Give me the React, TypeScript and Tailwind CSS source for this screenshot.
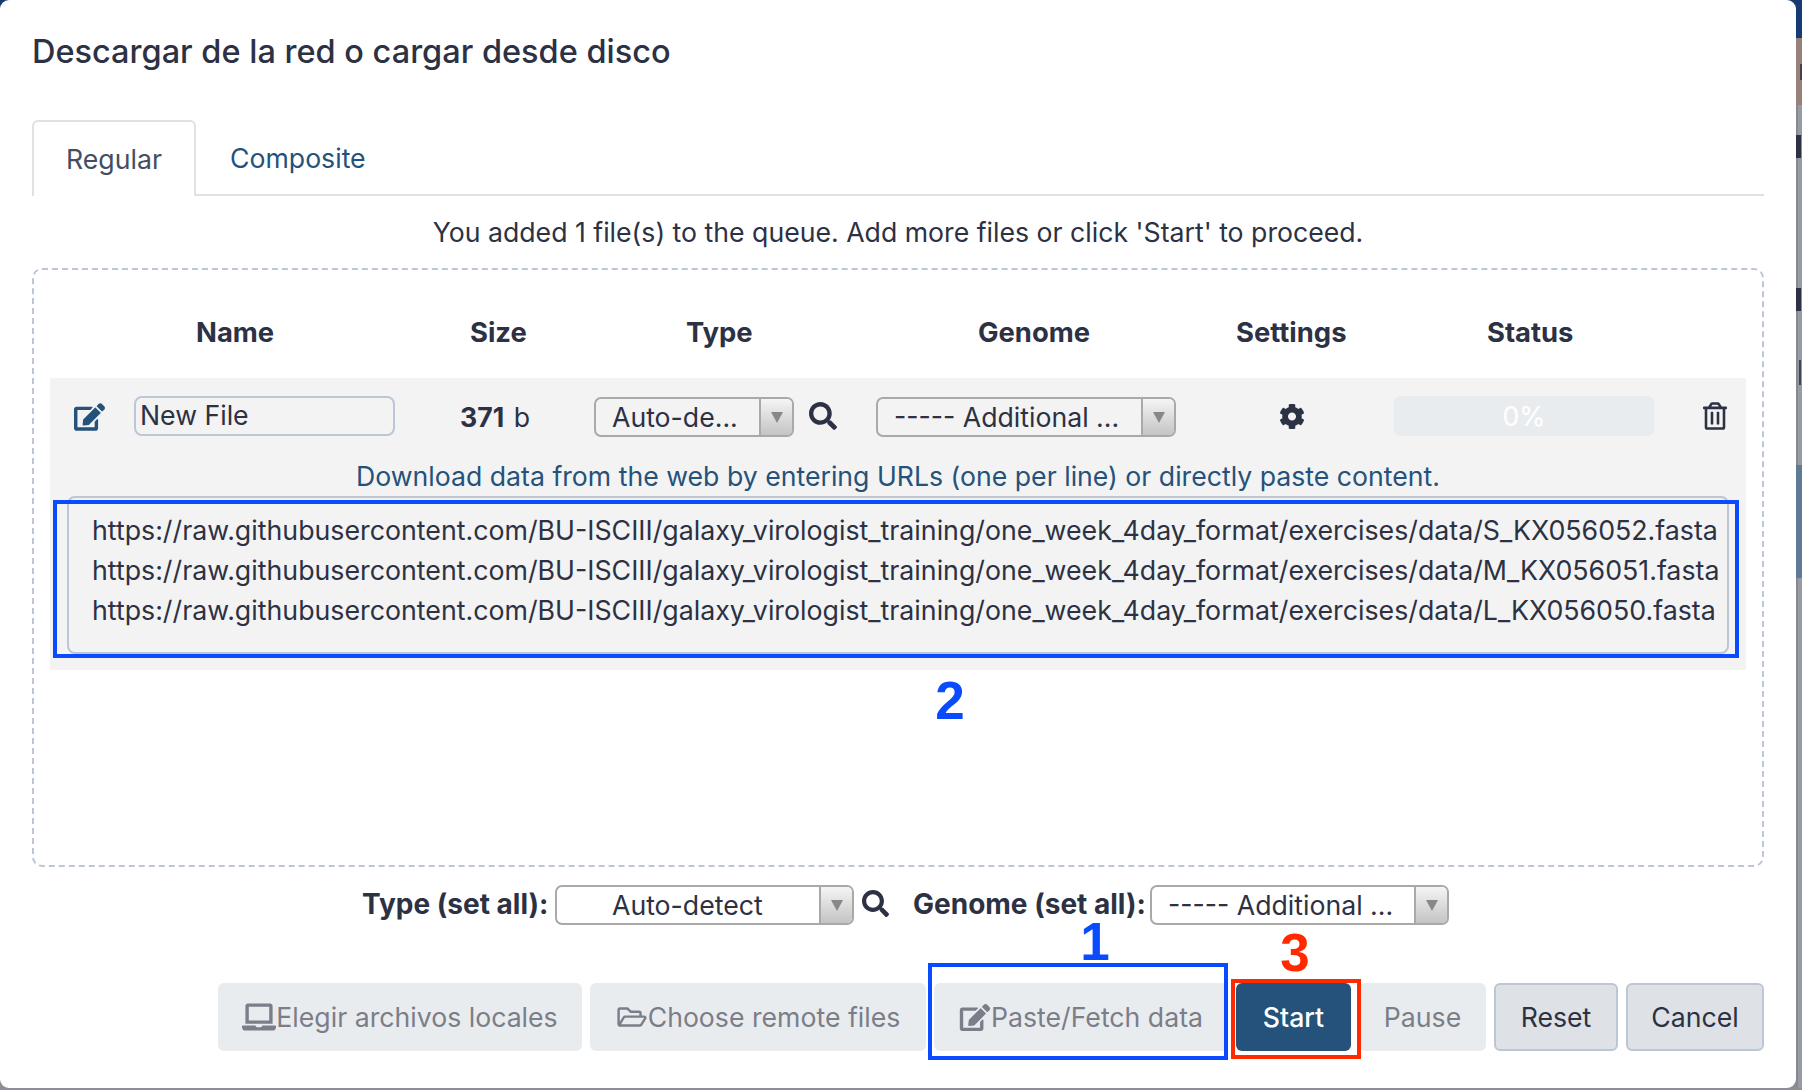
import { FaEdit, FaSearch, FaCog, FaRegTrashAlt, FaLaptop, FaRegFolderOpen } from 'react-icons/fa';

const URLS = [
  'https://raw.githubusercontent.com/BU-ISCIII/galaxy_virologist_training/one_week_4day_format/exercises/data/S_KX056052.fasta',
  'https://raw.githubusercontent.com/BU-ISCIII/galaxy_virologist_training/one_week_4day_format/exercises/data/M_KX056051.fasta',
  'https://raw.githubusercontent.com/BU-ISCIII/galaxy_virologist_training/one_week_4day_format/exercises/data/L_KX056050.fasta',
];

function Select({ label, className }: { label: string; className: string }) {
  return (
    <div className={`flex h-[40px] shrink-0 overflow-hidden rounded-[7px] border-2 border-[#a9a9a9] ${className}`}>
      <div className="min-w-0 flex-1 whitespace-nowrap text-[26.67px] leading-[37px]">{label}</div>
      <div className="flex w-[33px] shrink-0 items-center justify-center border-l-2 border-[#a9a9a9] bg-gradient-to-b from-[#f5f5f5] to-[#c4c4c4]">
        <span className="h-0 w-0 border-x-[6px] border-t-[11px] border-x-transparent border-t-[#888888]" />
      </div>
    </div>
  );
}

function DisabledButton({ children, width }: { children: React.ReactNode; width: string }) {
  return (
    <button className={`flex h-[68px] ${width} items-center justify-center rounded-[6px] bg-[#e9ecef] text-[26.67px] text-[#7b7e88]`}>
      {children}
    </button>
  );
}

// Slice of the page that shows behind the dialog on its right edge
function BackdropStrip() {
  return (
    <div className="flex flex-1 flex-col">
      <div className="h-[38px] bg-[#153a74]" />
      <div className="h-[26px] bg-[#96817a]" />
      <div className="h-[16px] bg-[#96817a] pl-[4px]">
        <div className="h-full bg-[#45404a]" />
      </div>
      <div className="h-[25px] bg-[#96817a]" />
      <div className="h-[30px] border-l-2 border-[#868892] bg-[#989aa4]" />
      <div className="h-[23px] w-[5px] bg-[#2c3143]" />
      <div className="h-[130px] border-l-2 border-[#868892] bg-[#989aa4]" />
      <div className="h-[23px] w-[5px] bg-[#2c3143]" />
      <div className="h-[49px] border-l-2 border-[#868892] bg-[#989aa4]" />
      <div className="h-[25px] border-l-2 border-[#868892] bg-[#989aa4] pl-[1px]">
        <div className="h-full w-[2px] bg-[#3c4154]" />
      </div>
      <div className="h-[80px] border-l-2 border-[#868892] bg-[#989aa4]" />
      <div className="h-[113px] bg-[#5f7a94]" />
      <div className="flex-1 border-l-2 border-[#868892] bg-[#989aa4]" />
    </div>
  );
}

export default function App() {
  return (
    <div className="relative flex h-[1090px] w-[1802px] flex-col overflow-hidden bg-[linear-gradient(#153a74_20px,#8d8f98_20px)] font-['Inter',sans-serif] text-[#2c3143]">
      <div className="flex h-[1088px] w-full">
        <div className="flex w-[1796px] flex-col rounded-[9px] bg-white">
          <h4 className="pl-[32px] pt-[32px] text-[32.5px] font-medium leading-[40px]">Descargar de la red o cargar desde disco</h4>

          <div className="mx-[32px] mt-[48px] flex h-[76px] border-b-2 border-[#dee2e6] text-[26.67px]">
            <div className="-mb-[2px] flex w-[164px] items-center justify-center rounded-t-[6px] border-2 border-b-0 border-[#dee2e6] bg-white text-[#444e63]">Regular</div>
            <div className="flex items-center pl-[34px] pt-[2px] text-[#25527a]">Composite</div>
          </div>

          <p className="mt-[18px] text-center text-[26.67px] leading-[36px]">You added 1 file(s) to the queue. Add more files or click 'Start' to proceed.</p>

          <div className="mx-[32px] mt-[18px] h-[599px] rounded-[10px] border-2 border-dashed border-[#bdc6d5] px-[16px]">
            <div className="flex h-[108px] items-center pt-[18px] text-[27.4px] font-bold">
              <div className="w-[267px] pl-[146px]">Name</div>
              <div className="w-[215px] pl-[153px]">Size</div>
              <div className="w-[316px] pl-[154px]">Type</div>
              <div className="w-[258px] pl-[130px]">Genome</div>
              <div className="w-[228px] pl-[130px]">Settings</div>
              <div className="pl-[153px]">Status</div>
            </div>

            <div className="flex h-[292px] flex-col bg-[#f3f3f3] px-[16px]">
              <div className="flex h-[78px] items-center">
                <FaEdit className="ml-[8px] h-[28px] w-[31px] shrink-0 text-[#25527a]" />
                <div className="ml-[29px] -mt-[2px] h-[40px] w-[261px] shrink-0 rounded-[8px] border-2 border-[#bdc6d5] pl-[4px] text-[26.67px] leading-[35px]">New File</div>
                <div className="ml-[65px] w-[134px] shrink-0 text-[26.67px]"><b>371</b>&nbsp;<span className="ml-[2px]">b</span></div>
                <Select label="Auto-de..." className="w-[200px] pl-[16px]" />
                <FaSearch className="ml-[15px] -mt-[2px] h-[28px] w-[28px] shrink-0" />
                <Select label="----- Additional ..." className="ml-[39px] w-[300px] pl-[16px]" />
                <FaCog className="ml-[103px] -mt-[2px] h-[27px] w-[26px] shrink-0" />
                <div className="ml-[89px] -mt-[2px] flex h-[40px] w-[260px] shrink-0 items-center justify-center rounded-[6px] bg-[#e9ecef] text-[26.67px] text-white">0%</div>
                <FaRegTrashAlt className="ml-[49px] -mt-[2px] h-[28px] w-[24px] shrink-0" />
              </div>
              <p className="mt-[2px] text-center text-[26.67px] leading-[36px] text-[#25527a]">Download data from the web by entering URLs (one per line) or directly paste content.</p>
              <div className="mx-[1px] mt-[2px] h-[158px] rounded-[8px] border-2 border-[#bdc6d5] pl-[23px] pt-[12px] text-[26.75px] leading-[40px]">
                {URLS.map((url) => (
                  <div key={url} className="whitespace-nowrap">{url}</div>
                ))}
              </div>
            </div>
          </div>

          <div className="mt-[18px] flex h-[40px] items-center pl-[362px] text-[28px]">
            <b className="-mt-[3px] w-[193px] whitespace-nowrap">Type (set all):</b>
            <Select label="Auto-detect" className="w-[299px] bg-white pl-[55px]" />
            <FaSearch className="ml-[8px] -mt-[4px] h-[27px] w-[27px] shrink-0" />
            <b className="ml-[24px] -mt-[3px] w-[237px] whitespace-nowrap">Genome (set all):</b>
            <Select label="----- Additional ..." className="w-[299px] bg-white pl-[16px]" />
          </div>

          <div className="mt-[58px] flex justify-end gap-[8px] pr-[32px]">
            <DisabledButton width="w-[364px]"><FaLaptop className="h-[28px] w-[34px]" />Elegir archivos locales</DisabledButton>
            <DisabledButton width="w-[336px]"><FaRegFolderOpen className="h-[26px] w-[32px]" />Choose remote files</DisabledButton>
            <DisabledButton width="w-[294px]"><FaEdit className="h-[27px] w-[32px]" />Paste/Fetch data</DisabledButton>
            <button className="h-[68px] w-[115px] rounded-[6px] bg-[#25527a] text-[26.67px] font-medium text-white">Start</button>
            <DisabledButton width="w-[127px]">Pause</DisabledButton>
            <button className="h-[68px] w-[124px] rounded-[6px] border-2 border-[#bdc6d5] bg-[#dee2e6] text-[26.67px]">Reset</button>
            <button className="h-[68px] w-[138px] rounded-[6px] border-2 border-[#bdc6d5] bg-[#dee2e6] text-[26.67px]">Cancel</button>
          </div>
        </div>
        <BackdropStrip />
      </div>

      {/* Tutorial annotations painted on top of the screenshot */}
      <div className="absolute left-[53px] top-[500px] h-[158px] w-[1686px] border-4 border-[#0a4bff]" />
      <div className="absolute left-[928px] top-[963px] h-[97px] w-[300px] border-4 border-[#0a4bff]" />
      <div className="absolute left-[1231px] top-[979px] h-[80px] w-[130px] border-4 border-[#ff2a00]" />
      <span className="absolute left-[1095px] top-[942px] -translate-x-1/2 -translate-y-1/2 font-['Liberation_Sans',sans-serif] text-[53px] font-bold leading-[40px] text-[#0a4bff]">1</span>
      <span className="absolute left-[950px] top-[701px] -translate-x-1/2 -translate-y-1/2 font-['Liberation_Sans',sans-serif] text-[53px] font-bold leading-[40px] text-[#0a4bff]">2</span>
      <span className="absolute left-[1295px] top-[953px] -translate-x-1/2 -translate-y-1/2 font-['Liberation_Sans',sans-serif] text-[53px] font-bold leading-[40px] text-[#ff2a00]">3</span>
    </div>
  );
}
